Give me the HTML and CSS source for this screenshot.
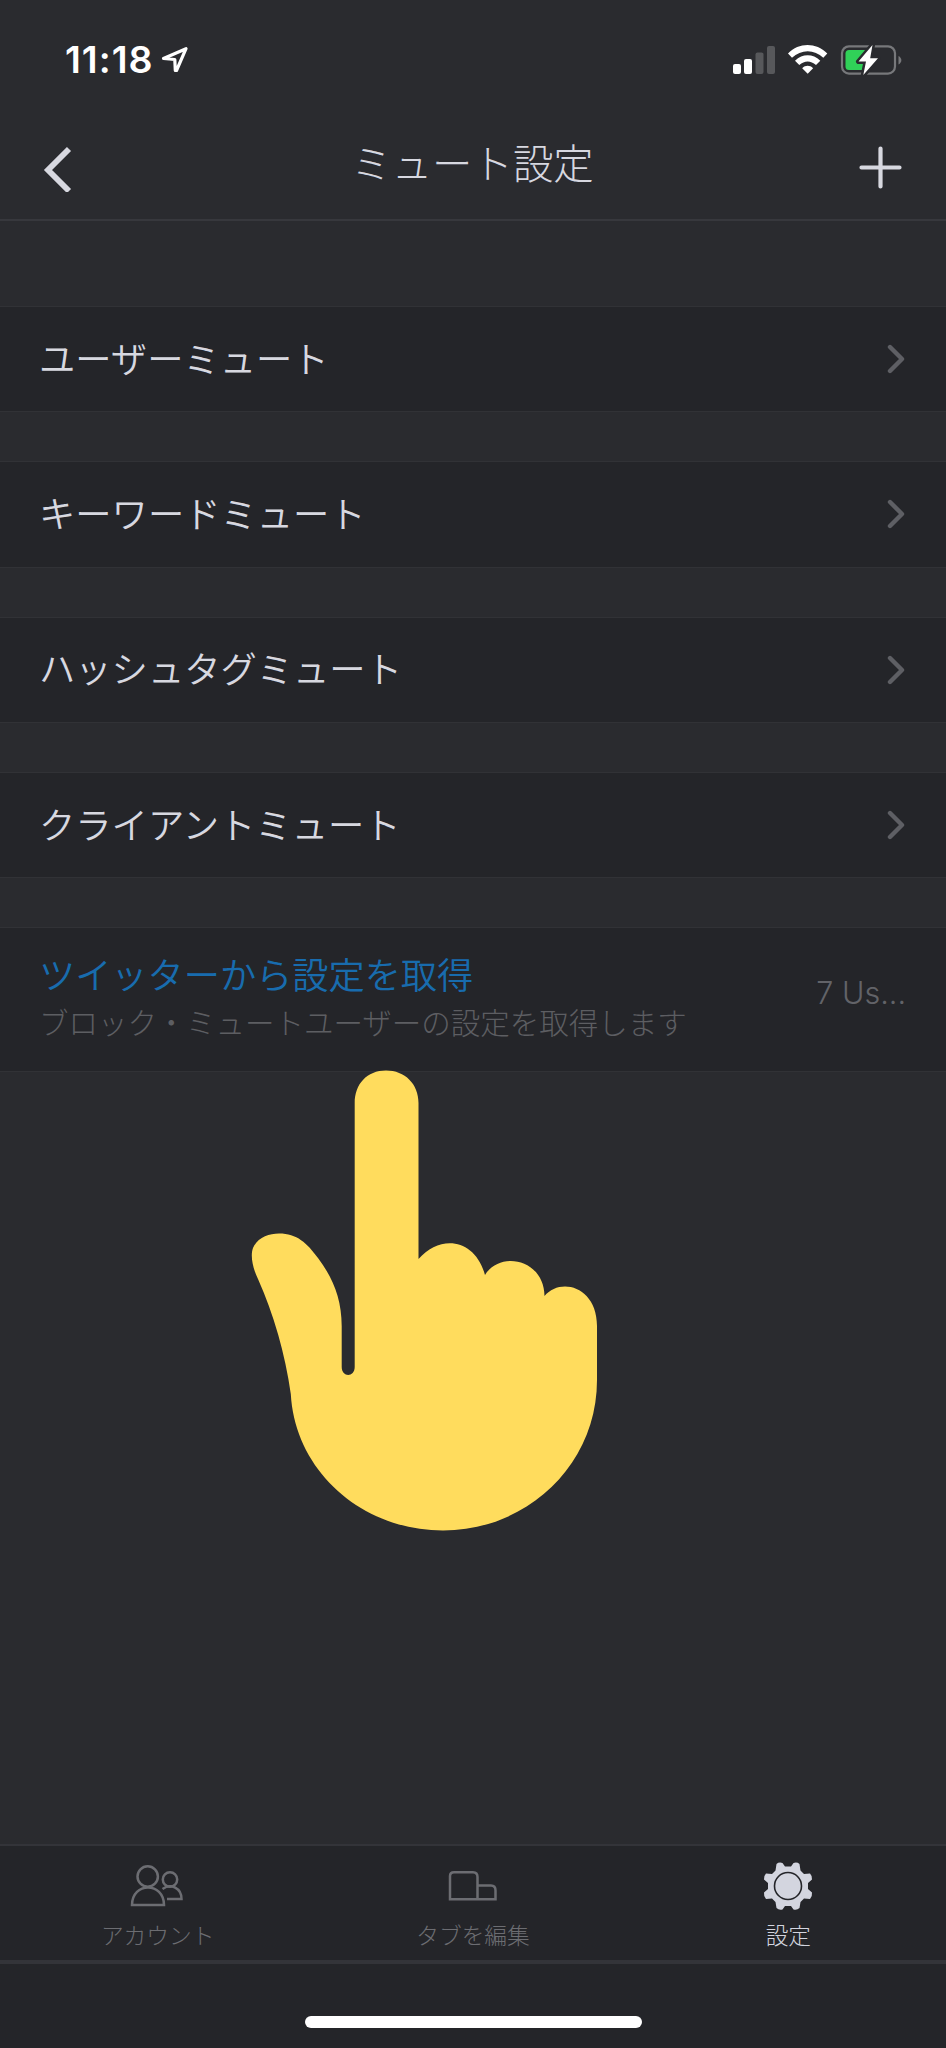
FILE: index.html
```
<!DOCTYPE html>
<html lang="ja">
<head>
<meta charset="utf-8">
<title>ミュート設定</title>
<link rel="stylesheet" href="styles.css">
</head>
<body>
<div class="screen">
  <div class="status">
    <div class="status-left">
      <span class="time">11:18</span>
      <svg class="locate" width="28" height="28" viewBox="0 0 28 28"><path d="M2.500 12.500 25 2.700 15.500 24.500 14.300 24.500 13.800 13.500 2.500 12.500Z" fill="none" stroke="#fff" stroke-width="3.200" stroke-linejoin="round"/></svg>
    </div>
    <svg class="indicators" width="172" height="34" viewBox="731 43 172 34">
      <g fill="#fff"><rect x="733" y="64" width="8" height="10" rx="2"/><rect x="744" y="59" width="8" height="15" rx="2"/></g>
      <g fill="#57585b"><rect x="755.500" y="52.500" width="8" height="21.500" rx="2"/><rect x="767" y="46" width="8" height="28" rx="2"/></g>
      <g fill="#fff">
        <path d="M788 53.500C799 42.300 816 42.300 827.300 53.500L823.300 57.700C814.500 49 801 49 792 57.700Z"/>
        <path d="M795 60.800C802.500 53.500 812.800 53.500 820.300 60.800L816 65C810.800 60.200 804.500 60.200 799.300 65Z"/>
        <path d="M802.200 68.200C805.500 65 809.800 65 813.100 68.200L807.700 73.800Z"/>
      </g>
      <rect x="842" y="46.300" width="53" height="27.300" rx="7" fill="none" stroke="#77787b" stroke-width="2.200"/>
      <path d="M898.500 56C902.300 58 902.300 62.500 898.500 64.500Z" fill="#77787b"/>
      <rect x="845.500" y="50" width="22" height="20" rx="3.500" fill="#30d158"/>
      <path d="M872.500 45 858.500 61.500H866L863.300 75 878 58.300H870.200Z" fill="#fff" stroke="#2a2b2f" stroke-width="5" stroke-linejoin="round" paint-order="stroke"/>
    </svg>
  </div>
  <header class="nav">
    <svg width="48" height="48" viewBox="0 0 48 48"><path d="M35 5.500 14 26.500 35 47.500" transform="translate(0 -.5)" fill="none" stroke="#d7d8e0" stroke-width="5.800"/></svg>
    <h1 class="title">ミュート設定</h1>
    <svg width="48" height="48" viewBox="0 0 48 48"><path d="M23.500 4.500V42.500M4.500 23.500H42.500" fill="none" stroke="#d7d8e0" stroke-width="4.200" stroke-linecap="round"/></svg>
  </header>
  <main class="list">
    <div class="row"><span class="label">ユーザーミュート</span><svg class="chev" width="20" height="30" viewBox="0 0 20 30"><path d="M4 3 16 15 4 27"/></svg></div>
    <div class="row"><span class="label">キーワードミュート</span><svg class="chev" width="20" height="30" viewBox="0 0 20 30"><path d="M4 3 16 15 4 27"/></svg></div>
    <div class="row"><span class="label">ハッシュタグミュート</span><svg class="chev" width="20" height="30" viewBox="0 0 20 30"><path d="M4 3 16 15 4 27"/></svg></div>
    <div class="row"><span class="label">クライアントミュート</span><svg class="chev" width="20" height="30" viewBox="0 0 20 30"><path d="M4 3 16 15 4 27"/></svg></div>
    <div class="row fetch">
      <div class="texts"><span class="link">ツイッターから設定を取得</span><span class="desc">ブロック・ミュートユーザーの設定を取得します</span></div>
      <span class="value">7 Us...</span>
    </div>
    <svg class="hand" width="350" height="464" viewBox="0 0 350 464"><path d="M104.700 33C104.700 14 117 .5 136 .5S168.500 14 168.500 33V189C190 164 225 168 235 205C250 180 294 189 294.500 226C310 207 347 216 347 256V310C347 396 276 460.500 193 460.500C112 460.500 45 401 40.800 324Q32 263 8 209C3 199 0 186 3 178C8 167 19 163.500 29 163.500C47 163.500 57 173 68 188C83 208 91.700 229 91.700 256V297C91.700 307.500 104.700 307.500 104.700 297Z" fill="#ffdc5d"/></svg>
  </main>
  <nav class="tabs">
    <div class="tab">
      <svg width="56" height="50" viewBox="3 0 56 50" fill="none" stroke="#6c6d72" stroke-width="2.500"><circle cx="20.700" cy="15.500" r="10.200"/><path d="M5 44C5 20.500 37 20.500 37 44Z"/><circle cx="43" cy="18.500" r="7.200"/><path d="M35.500 28C44 22 54.500 27 54.500 38H40"/></svg>
      <span>アカウント</span>
    </div>
    <div class="tab">
      <svg width="56" height="50" viewBox="0 0 56 50" fill="none" stroke="#6c6d72" stroke-width="2.500"><path d="M5 38.200V15Q5 11.200 9 11.200H28Q32.500 11.200 32.500 16V38.200ZM32.500 24.500H46Q50.500 24.500 50.500 29.500V38.200H32.500"/></svg>
      <span>タブを編集</span>
    </div>
    <div class="tab active">
      <svg width="56" height="50" viewBox="0 0 56 50"><path d="M16.500 3Q19 .8 22.500 2L25 5.500H31L33.500 2Q37 .8 39.500 3L40.500 9.500 44 13 50 12.500Q52.500 15 52 18.500L48 22V28L52 31.500Q52.500 35 50 38L44 37.500 40.500 41 39.500 47Q37 49.500 33.500 48.500L31 45H25L22.500 48.500Q19 49.500 16.500 47L15.500 41 12 37.500 6 38Q3.500 35 4 31.500L8 28V22L4 18.500Q3.500 15 6 12.500L12 13 15.500 9.500Z" fill="#d3d5df"/><circle cx="28" cy="25" r="13.500" fill="none" stroke="#242529" stroke-width="1.600"/></svg>
      <span>設定</span>
    </div>
  </nav>
  <footer class="home"><div class="bar"></div></footer>
</div>
</body>
</html>
```
FILE: styles.css
```
* { box-sizing: border-box; }
body { margin: 0; background: #2a2b2f; font-family: "Noto Sans CJK JP", sans-serif; font-weight: 300; color: #d7d8e0; }
svg { display: block; flex: none; }
.screen { width: 946px; height: 2048px; display: flex; flex-direction: column; overflow: hidden; }
.status { height: 120px; padding: 0 43px 0 65px; display: flex; justify-content: space-between; align-items: center; }
.status-left { display: flex; align-items: center; gap: 7px; }
.time { font: 600 37.500px/44px Inter, sans-serif; letter-spacing: 1px; color: #fff; }
.nav { height: 101px; padding: 0 41px 4px 34px; display: flex; justify-content: space-between; align-items: center; border-bottom: 2px solid #37383d; }
.title { margin: 0; padding: 0 0 11px 6px; font-size: 40.400px; line-height: 60px; font-weight: 300; }
.list { flex: 1; padding-top: 85px; display: flex; flex-direction: column; gap: 49px; position: relative; }
.row { flex: none; height: 106.300px; padding: 0 40px 0 39px; display: flex; align-items: center; justify-content: space-between; background: #242529; border-top: 1px solid #313236; border-bottom: 1px solid #313236; }
.label { padding-bottom: 5px; font-size: 36.300px; line-height: 54px; font-weight: 350; }
.chev path { fill: none; stroke: #5e5f64; stroke-width: 4.400; stroke-linecap: round; stroke-linejoin: round; }
.fetch { height: 145px; }
.texts { padding-bottom: 7px; display: flex; flex-direction: column; }
.link { font-size: 36.200px; line-height: 49px; font-weight: 350; color: #186cae; }
.desc { font-size: 29.500px; line-height: 46px; color: #5d5e62; }
.value { padding-bottom: 14px; font: 300 30.500px/44px Inter, sans-serif; color: #626368; }
.hand { position: absolute; left: 250px; top: 849px; }
.tabs { height: 116px; padding-top: 15px; display: grid; grid-template-columns: repeat(3, 1fr); background: #242529; border-top: 2px solid #333439; }
.tab { display: flex; flex-direction: column; align-items: center; gap: 7px; font-size: 22.700px; line-height: 34px; color: #6c6d72; }
.active { color: #d3d5df; }
.home { height: 88px; padding-top: 52px; background: #242529; border-top: 4px solid #333439; }
.bar { width: 337px; height: 12px; margin: 0 auto; border-radius: 6px; background: #fff; }
```
